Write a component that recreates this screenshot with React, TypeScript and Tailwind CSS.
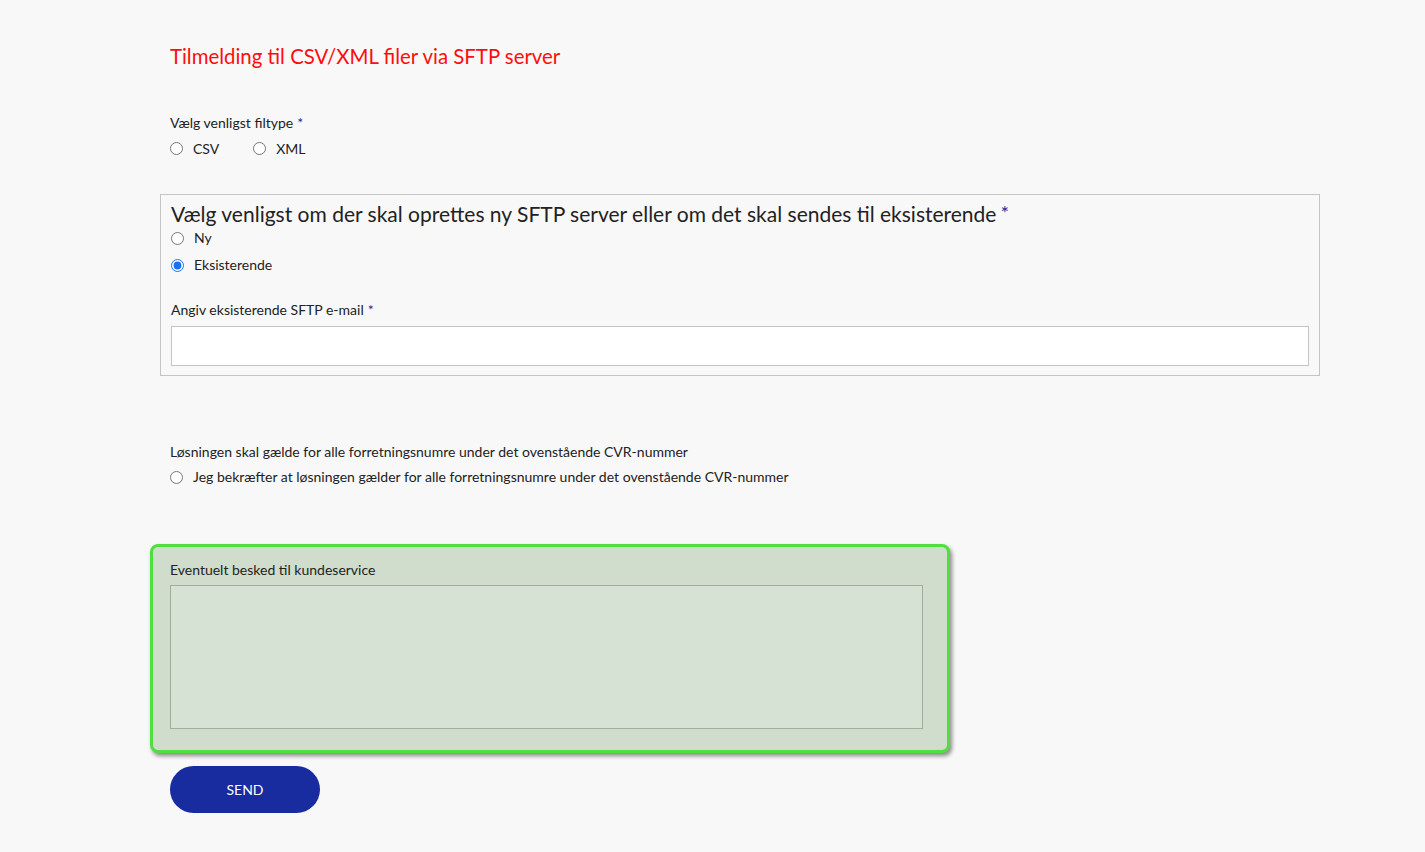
import { useState } from 'react';

function Radio({ checked, onChange }: { checked: boolean; onChange: () => void }) {
  return (
    <input
      type="radio"
      checked={checked}
      onChange={onChange}
      className="m-0 h-[13px] w-[13px] accent-[#1a73e8]"
    />
  );
}

function Req() {
  return <span className="ml-1 text-[#1a2ca0]">*</span>;
}

export default function App() {
  const [fileType, setFileType] = useState<'csv' | 'xml' | null>(null);
  const [server, setServer] = useState<'ny' | 'eks'>('eks');
  const [confirm, setConfirm] = useState(false);

  return (
    <div className="min-h-[852px] bg-[#f8f8f8] font-['Lato',sans-serif] text-[14px] text-[#222]">
      <div className="flex w-[1160px] flex-col pl-[170px] pt-[42px]">
        <h1 className="text-[20.4px] leading-[28px] text-[#ff0d0d]">
          Tilmelding til CSV/XML filer via SFTP server
        </h1>

        <div className="mt-[43px]">
          <div className="leading-[20px]">
            Vælg venligst filtype
            <Req />
          </div>
          <div className="mt-[5px] flex items-center">
            <label className="flex items-center gap-[10px]">
              <Radio checked={fileType === 'csv'} onChange={() => setFileType('csv')} />
              CSV
            </label>
            <label className="ml-[34px] flex items-center gap-[10px]">
              <Radio checked={fileType === 'xml'} onChange={() => setFileType('xml')} />
              XML
            </label>
          </div>
        </div>
      </div>

      <fieldset className="mt-[35px] ml-[160px] w-[1160px] border border-[#c4c4c4] px-[10px] pt-[5px] pb-[9px]">
        <div className="text-[21px] leading-[28px]">
          Vælg venligst om der skal oprettes ny SFTP server eller om det skal sendes til eksisterende
          <span className="relative top-[-2px] ml-[4px] text-[20px] leading-[20px] text-[#1a2ca0]">
            *
          </span>
        </div>
        <label className="mt-0 flex items-center gap-[10px] leading-[20px]">
          <Radio checked={server === 'ny'} onChange={() => setServer('ny')} />
          Ny
        </label>
        <label className="mt-[7px] flex items-center gap-[10px] leading-[20px]">
          <Radio checked={server === 'eks'} onChange={() => setServer('eks')} />
          Eksisterende
        </label>
        <div className="mt-[25px] leading-[20px]">
          Angiv eksisterende SFTP e-mail
          <Req />
        </div>
        <input
          type="email"
          className="mt-[6px] block h-[40px] w-full border border-[#c4c4c4] bg-white px-2 outline-none"
        />
      </fieldset>

      <div className="pl-[170px]">
        <div className="mt-[66px] leading-[20px]">
          Løsningen skal gælde for alle forretningsnumre under det ovenstående CVR-nummer
        </div>
        <label className="mt-[5px] flex items-center gap-[10px] leading-[20px]">
          <Radio checked={confirm} onChange={() => setConfirm(true)} />
          Jeg bekræfter at løsningen gælder for alle forretningsnumre under det ovenstående CVR-nummer
        </label>
      </div>

      <div className="mt-[57px] ml-[150px] w-[800px] rounded-[8px] border-[3px] border-[#4fe03f] bg-[#d0ddcc] px-[17px] pt-[13px] pb-[21px] shadow-[2px_3px_4px_rgba(0,0,0,0.45)]">
        <div className="leading-[20px]">Eventuelt besked til kundeservice</div>
        <textarea className="mt-[5px] block h-[144px] w-[753px] resize-none border border-[#a3ac9f] bg-[#d6e2d4] p-2 outline-none" />
      </div>

      <div className="pl-[170px] pt-[13px] pb-[39px]">
        <button
          type="button"
          className="h-[47px] w-[150px] rounded-full bg-[#182b9f] text-[14px] text-white"
        >
          SEND
        </button>
      </div>
    </div>
  );
}
